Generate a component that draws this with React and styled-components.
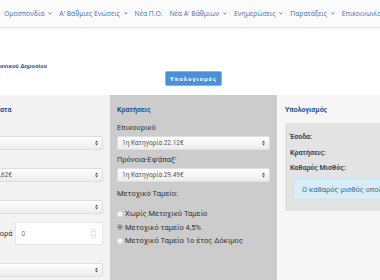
import styled, { createGlobalStyle } from "styled-components";

const GlobalStyle = createGlobalStyle`
  html, body {
    margin: 0;
    padding: 0;
    background: #ffffff;
    overflow: hidden;
  }
  body {
    font-family: Roboto, "Liberation Sans", Arial, sans-serif;
  }
`;

const NAV = [
  { label: "Ομοσπονδία", drop: true },
  { label: "Α' Βάθμιες Ενώσεις", drop: true },
  { label: "Νέα Π.Ο.", drop: false },
  { label: "Νέα Α' Βάθμιων", drop: true },
  { label: "Ενημερώσεις", drop: true },
  { label: "Παρατάξεις", drop: true },
  { label: "Επικοινωνία", drop: false },
];

const Chevron = () => (
  <svg width="4" height="3" viewBox="0 0 4 3">
    <polyline points="0.4,0.6 2,2.2 3.6,0.6" fill="none" stroke="currentColor" strokeWidth="0.8" />
  </svg>
);

const BankIcon = () => (
  <svg width="7" height="7" viewBox="0 0 7 7">
    <polygon points="0,2.2 3.5,0 7,2.2" fill="#2f5f97" />
    <rect x="0.8" y="2.8" width="1.2" height="3" fill="#2f5f97" />
    <rect x="2.9" y="2.8" width="1.2" height="3" fill="#2f5f97" />
    <rect x="5" y="2.8" width="1.2" height="3" fill="#2f5f97" />
    <rect x="0" y="6" width="7" height="1" fill="#2f5f97" />
  </svg>
);

const SelectArrows = () => (
  <svg width="3" height="6" viewBox="0 0 3 6">
    <polygon points="0,2.4 1.5,0.4 3,2.4" fill="#555" />
    <polygon points="0,3.6 1.5,5.6 3,3.6" fill="#555" />
  </svg>
);

const Spinner = () => (
  <svg width="5" height="9" viewBox="0 0 5 9">
    <rect x="0.3" y="0.3" width="4.4" height="8.4" rx="1" fill="none" stroke="#d4d4d4" strokeWidth="0.6" />
    <polyline points="1.3,3.2 2.5,2 3.7,3.2" fill="none" stroke="#aaa" strokeWidth="0.6" />
    <polyline points="1.3,5.8 2.5,7 3.7,5.8" fill="none" stroke="#aaa" strokeWidth="0.6" />
  </svg>
);

const App = () => {
  return (
    <Page>
      <GlobalStyle />
      <NavBar>
        <BankIcon />
        <NavList>
          {NAV.map((item) => (
            <NavItem key={item.label}>
              {item.label}
              {item.drop && <Chevron />}
            </NavItem>
          ))}
        </NavList>
      </NavBar>

      <Main>
        <Title>Μισθός Μηχανικού Δημοσίου</Title>
        <ButtonRow>
          <CalcButton>Υπολογισμός</CalcButton>
        </ButtonRow>

        <Columns>
          <Panel $bg="#f3f3f3">
            <Header>Μισθός-Επιδόματα</Header>
            <Label>Βαθμός</Label>
            <Select>
              <span>Α</span>
              <SelectArrows />
            </Select>
            <Label>ΜΚ</Label>
            <Select>
              <span>ΠΕ ΜΚ3 - 1.325,62€</span>
              <SelectArrows />
            </Select>
            <Label>Παιδιά</Label>
            <Select>
              <span>0</span>
              <SelectArrows />
            </Select>
            <InlineField>
              <Label $inline>Προσωπ. Διαφορά</Label>
              <NumberInput>
                <span>0</span>
                <Spinner />
              </NumberInput>
            </InlineField>
            <Label>Ζώνη</Label>
            <Select>
              <span>Όχι</span>
              <SelectArrows />
            </Select>
          </Panel>

          <Panel $bg="#cccccc">
            <Header>Κρατήσεις</Header>
            <Label>Επικουρικό</Label>
            <Select>
              <span>1η Κατηγορία 22.12€</span>
              <SelectArrows />
            </Select>
            <Label>Πρόνοια-Εφ'άπαξ'</Label>
            <Select>
              <span>1η Κατηγορία 29.49€</span>
              <SelectArrows />
            </Select>
            <GroupLabel>Μετοχικό Ταμείο:</GroupLabel>
            <RadioGroup>
              <RadioRow>
                <Radio />
                Χωρίς Μετοχικό Ταμείο
              </RadioRow>
              <RadioRow>
                <Radio $checked />
                Μετοχικό ταμείο 4,5%
              </RadioRow>
              <RadioRow>
                <Radio />
                Μετοχικό Ταμείο 1ο έτος Δόκιμος
              </RadioRow>
            </RadioGroup>
          </Panel>

          <Panel $bg="#f6f6f6" $divider>
            <Header>Υπολογισμός</Header>
            <ResultBox>
              <ResultRow>Έσοδα:</ResultRow>
              <ResultRow>Κρατήσεις:</ResultRow>
              <ResultRow>Καθαρός Μισθός:</ResultRow>
              <Alert>Ο καθαρός μισθός υπολογίζεται αυτόματα</Alert>
            </ResultBox>
          </Panel>
        </Columns>
      </Main>
    </Page>
  );
};

const Page = styled.div`
  width: 380px;
  height: 280px;
  overflow: hidden;
  background: #ffffff;
`;

const NavBar = styled.nav`
  height: 27px;
  display: flex;
  align-items: center;
  background: #fbfbfb;
  border-bottom: 1px solid #e4e4e4;
  box-shadow: 0 1px 2px rgba(0, 0, 0, 0.05);
  white-space: nowrap;
`;

const NavList = styled.div`
  display: flex;
  align-items: center;
  margin-left: 0.5px;
`;

const NavItem = styled.div`
  display: inline-flex;
  align-items: center;
  gap: 4px;
  padding: 0 3.4px;
  font-family: "Open Sans", "Noto Sans", sans-serif;
  font-size: 6.8px;
  color: #3473ba;
`;

const Main = styled.div`
  width: 501px;
  margin-left: -57px;
`;

const Title = styled.div`
  padding: 34px 7px 0 23px;
  line-height: 8px;
  font-size: 6px;
  font-weight: 700;
  color: #2b5d9b;
  white-space: nowrap;
`;

const ButtonRow = styled.div`
  display: flex;
  justify-content: center;
  margin-top: 1px;
`;

const CalcButton = styled.button`
  width: 57px;
  height: 15px;
  padding: 0;
  border: 1px solid #7db6ea;
  border-radius: 2px;
  background: #4a90d8;
  color: #ffffff;
  font-family: Roboto, "Liberation Sans", sans-serif;
  font-size: 6px;
  font-weight: 700;
  letter-spacing: 1px;
`;

const Columns = styled.div`
  display: grid;
  grid-template-columns: 167px 167px 167px;
  margin-top: 9px;
  height: 190px;
`;

const Panel = styled.div`
  background: ${(p) => p.$bg};
  padding: 11px 7px;
  border-left: ${(p) => (p.$divider ? "1px solid #ffffff" : "none")};
`;

const Header = styled.div`
  font-size: 7px;
  line-height: 8px;
  font-weight: 700;
  color: #1f5291;
  margin-bottom: 10px;
  white-space: nowrap;
`;

const Label = styled.div`
  font-size: 7.5px;
  line-height: 8px;
  color: #333333;
  margin-bottom: ${(p) => (p.$inline ? "0" : "4px")};
  white-space: nowrap;
`;

const GroupLabel = styled(Label)`
  margin-top: 8px;
`;

const Select = styled.div`
  box-sizing: border-box;
  height: 14px;
  display: flex;
  align-items: center;
  justify-content: space-between;
  padding: 0 4px;
  margin-bottom: 6px;
  border: 1px solid #dedede;
  border-radius: 2px;
  background: linear-gradient(#ffffff, #ececec);
  font-size: 6.5px;
  color: #555555;
  white-space: nowrap;
`;

const InlineField = styled.div`
  display: flex;
  align-items: center;
  gap: 2px;
  margin: 8px 0 6px;
`;

const NumberInput = styled.div`
  flex: 1;
  box-sizing: border-box;
  height: 23px;
  display: flex;
  align-items: center;
  justify-content: space-between;
  padding: 0 6px;
  background: #ffffff;
  border: 1px solid #e6e6e6;
  border-radius: 2px;
  font-size: 6.5px;
  color: #777777;
`;

const RadioGroup = styled.div`
  margin-top: 9px;
`;

const RadioRow = styled.div`
  height: 13.5px;
  display: flex;
  align-items: center;
  gap: 2px;
  font-size: 7.5px;
  color: #333333;
  white-space: nowrap;
`;

const Radio = styled.span`
  box-sizing: border-box;
  width: 6px;
  height: 6px;
  border-radius: 50%;
  background: ${(p) => (p.$checked ? "radial-gradient(circle, #6f6f6f 0 1.4px, #b5b5b5 1.6px)" : "#ffffff")};
  border: 0.5px solid ${(p) => (p.$checked ? "#9a9a9a" : "#e0e0e0")};
`;

const ResultBox = styled.div`
  margin-top: -1px;
  padding: 10px 0 11px 5px;
  background: #e3e3e3;
`;

const ResultRow = styled.div`
  font-size: 7px;
  line-height: 8px;
  font-weight: 700;
  color: #2d4d70;
  margin-bottom: 7.5px;
  white-space: nowrap;
`;

const Alert = styled.div`
  box-sizing: border-box;
  height: 22px;
  margin: -1.5px 0 0 3px;
  display: flex;
  align-items: center;
  padding: 0 8px;
  background: #d9edf7;
  border: 1px solid #c4e3f3;
  font-size: 7.5px;
  color: #31708f;
  white-space: nowrap;
`;

export default App;
